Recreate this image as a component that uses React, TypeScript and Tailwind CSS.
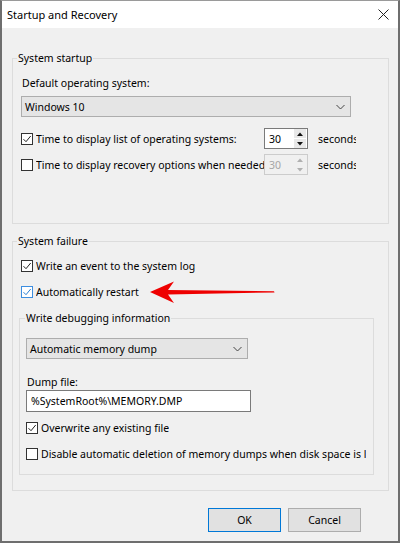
import React from "react";

function Check({ checked, focus }: { checked?: boolean; focus?: boolean }) {
  return (
    <span
      className={`flex h-[12px] w-[12px] shrink-0 items-center justify-center border bg-white ${
        focus ? "border-[#3d8ee0]" : "border-[#333333]"
      }`}
    >
      {checked && (
        <svg width="10" height="10" viewBox="0 0 10 10">
          <path
            d="M1.5 5.2 L4 7.7 L8.7 2"
            fill="none"
            stroke={focus ? "#2a7fd4" : "#222"}
            strokeWidth="1"
          />
        </svg>
      )}
    </span>
  );
}

function CheckRow({
  label,
  checked,
  focus,
  width,
}: {
  label: string;
  checked?: boolean;
  focus?: boolean;
  width?: string;
}) {
  return (
    <div className="flex h-[16px] items-center">
      <Check checked={checked} focus={focus} />
      <span className={`ml-[3px] overflow-hidden whitespace-nowrap ${width ?? ""}`}>{label}</span>
    </div>
  );
}

function Chevron() {
  return (
    <svg width="9" height="6" viewBox="0 0 9 6">
      <path d="M0.5 1 L4.5 5 L8.5 1" fill="none" stroke="#444" strokeWidth="1" />
    </svg>
  );
}

function Select({ value, width }: { value: string; width: string }) {
  return (
    <div
      className={`flex h-[21px] items-center justify-between border border-[#adadad] bg-[#e5e5e5] pl-[3px] pr-[5px] ${width}`}
    >
      <span>{value}</span>
      <Chevron />
    </div>
  );
}

function Spinner({ disabled }: { disabled?: boolean }) {
  const arrow = disabled ? "#b0b0b0" : "#111";
  return (
    <div
      className={`flex h-[21px] w-[44px] shrink-0 items-center justify-between border pl-[4px] pr-[1px] ${
        disabled ? "border-[#cccccc] bg-[#f0f0f0] text-[#a6a6a6]" : "border-[#7a7a7a] bg-white"
      }`}
    >
      <span>30</span>
      <div className="flex h-[19px] flex-col gap-px">
        <div
          className={`flex h-[9px] w-[12px] items-center justify-center ${
            disabled ? "bg-[#f0f0f0]" : "bg-[#e8e8e8]"
          }`}
        >
          <svg width="6" height="4" viewBox="0 0 6 4">
            <path d="M0 4 L3 0.5 L6 4 Z" fill={arrow} />
          </svg>
        </div>
        <div
          className={`flex h-[9px] w-[12px] items-center justify-center ${
            disabled ? "bg-[#f0f0f0]" : "bg-[#e8e8e8]"
          }`}
        >
          <svg width="6" height="4" viewBox="0 0 6 4">
            <path d="M0 0 L3 3.5 L6 0 Z" fill={arrow} />
          </svg>
        </div>
      </div>
    </div>
  );
}

function SpinRow({ label, checked, disabled }: { label: string; checked?: boolean; disabled?: boolean }) {
  return (
    <div className="flex h-[21px] items-center">
      <Check checked={checked} />
      <span className="ml-[3px] w-[228px] shrink-0 overflow-hidden whitespace-nowrap">{label}</span>
      <Spinner disabled={disabled} />
      <span className="ml-[10px] w-[38px] shrink-0 overflow-hidden whitespace-nowrap">seconds</span>
    </div>
  );
}

export default function App() {
  return (
    <div className="relative h-[543px] w-[400px] overflow-hidden border-x-2 border-b-2 border-t border-[#6e6e6e] border-t-[#9a9a9a] bg-[#f0f0f0] font-['Noto_Sans',sans-serif] text-[10.5px] leading-[16px] text-black">
      {/* title bar */}
      <div className="flex h-[27px] items-center justify-between bg-white pl-[5px] pr-[9px]">
        <span className="text-[11px]">Startup and Recovery</span>
        <svg width="11" height="11" viewBox="0 0 11 11">
          <path d="M0.5 0.5 L10.5 10.5 M10.5 0.5 L0.5 10.5" stroke="#222" strokeWidth="1" />
        </svg>
      </div>

      <div className="px-[10px]">
        <fieldset className="mt-[22px] w-[377px] border border-[#dcdcdc]">
          <legend className="ml-[4px] px-[1px]">System startup</legend>
          <div className="pb-[48px] pl-[8px] pt-[9px]">
            <div className="pl-px">Default operating system:</div>
            <div className="mt-[5px]">
              <Select value="Windows 10" width="w-[330px]" />
            </div>
            <div className="mt-[11px]">
              <SpinRow label="Time to display list of operating systems:" checked />
            </div>
            <div className="mt-[5px]">
              <SpinRow label="Time to display recovery options when needed:" disabled />
            </div>
          </div>
        </fieldset>

        <fieldset className="mt-[9px] w-[377px] border border-[#dcdcdc]">
          <legend className="ml-[4px] px-[1px]">System failure</legend>
          <div className="pb-[15px] pl-[6px] pt-[9px]">
            <div className="pl-[2px]">
              <CheckRow label="Write an event to the system log" checked />
            </div>
            <div className="mt-[10px] pl-[2px]">
              <CheckRow label="Automatically restart" checked focus />
            </div>

            <fieldset className="mt-[10px] w-[355px] border border-[#dcdcdc]">
              <legend className="ml-[5px] px-[1px]">Write debugging information</legend>
              <div className="pb-[12px] pl-[6px] pt-[12px]">
                <Select value="Automatic memory dump" width="w-[222px]" />
                <div className="mt-[16px] pl-px leading-[15px]">Dump file:</div>
                <div className="flex h-[22px] w-[225px] items-center border border-[#7a7a7a] bg-white pl-[4px]">
                  %SystemRoot%\MEMORY.DMP
                </div>
                <div className="mt-[8px]">
                  <CheckRow label="Overwrite any existing file" checked />
                </div>
                <div className="mt-[10px]">
                  <CheckRow
                    label="Disable automatic deletion of memory dumps when disk space is low"
                    width="w-[325px]"
                  />
                </div>
              </div>
            </fieldset>
          </div>
        </fieldset>
      </div>

      <div className="mt-[17px] flex justify-end gap-[7px] pr-[37px]">
        <button className="h-[24px] w-[73px] border border-[#0078d7] bg-[#e1e1e1]">OK</button>
        <button className="h-[24px] w-[73px] border border-[#adadad] bg-[#e1e1e1]">Cancel</button>
      </div>

      {/* annotation arrow */}
      <svg
        className="absolute left-[146px] top-[279px]"
        width="128"
        height="24"
        viewBox="0 0 128 24"
      >
        <path
          d="M2 12 L26 1.5 L20 10 L126 11.2 L126.5 12.4 L20 14.5 L26 23 Z"
          fill="#ee0000"
        />
      </svg>
    </div>
  );
}
